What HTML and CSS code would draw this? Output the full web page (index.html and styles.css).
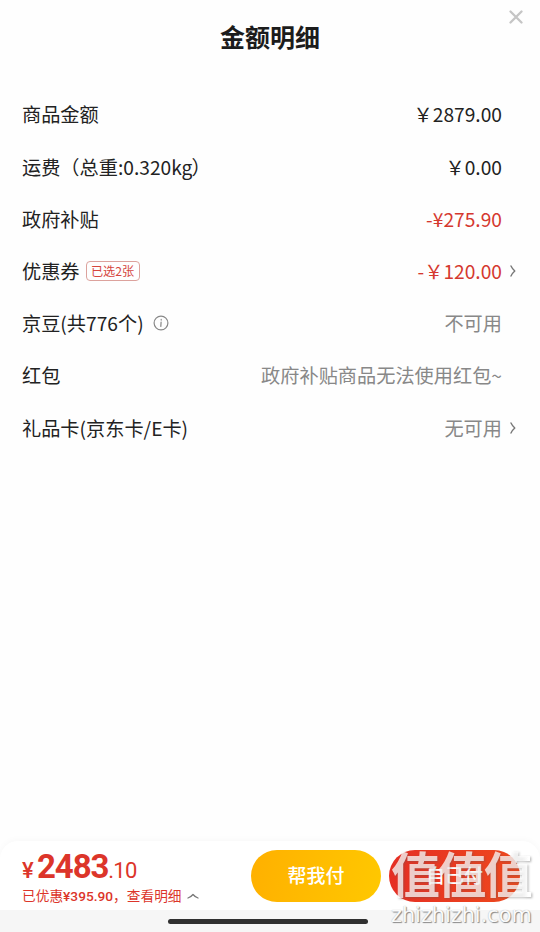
FILE: index.html
```html
<!DOCTYPE html>
<html lang="zh-CN">
<head>
<meta charset="utf-8">
<title>金额明细</title>
<link rel="stylesheet" href="styles.css">
</head>
<body>
<div class="sheet">
  <header class="header">
    <h1>金额明细</h1>
    <svg class="close" viewBox="0 0 14 14"><path d="M1.5 1.5 12.5 12.5M12.5 1.5 1.5 12.5"/></svg>
  </header>
  <main class="list">
    <div class="row"><span>商品金额</span><span class="value">￥2879.00</span></div>
    <div class="row"><span>运费（总重:0.320kg<span class="close-paren">）</span></span><span class="value">￥0.00</span></div>
    <div class="row"><span>政府补贴</span><span class="value red">-¥275.90</span></div>
    <div class="row"><span>优惠券</span><span class="tag">已选2张</span><span class="value red">-￥120.00</span><svg class="arrow" viewBox="0 0 6 12"><path d="M1 1C2.2 3.6 3.4 4.8 4.8 6 3.4 7.2 2.2 8.4 1 11"/></svg></div>
    <div class="row"><span>京豆(共776个)</span><svg class="info" viewBox="0 0 16 16"><circle cx="8" cy="8" r="6.9"/><path d="M8.2 4.4v.7M8.1 7.1 7.8 11.4"/></svg><span class="value gray">不可用</span></div>
    <div class="row"><span>红包</span><span class="value gray">政府补贴商品无法使用红包~</span></div>
    <div class="row"><span>礼品卡(京东卡/E卡)</span><span class="value gray">无可用</span><svg class="arrow" viewBox="0 0 6 12"><path d="M1 1C2.2 3.6 3.4 4.8 4.8 6 3.4 7.2 2.2 8.4 1 11"/></svg></div>
  </main>
  <footer class="bar">
    <div class="total">
      <div class="price"><span class="yen">¥</span><span class="integer">2483</span><span class="decimal">.10</span></div>
      <div class="saved"><span>已优惠<b>¥395.90</b>，查看明细</span><svg class="up" viewBox="0 0 12 6"><path d="M1 5C3.2 4.3 4.7 3 6 1.5 7.3 3 8.8 4.3 11 5"/></svg></div>
    </div>
    <div class="btn yellow">帮我付</div>
    <div class="btn orange">自己付</div>
  </footer>
  <div class="home"><div class="home-line"></div></div>
  <div class="watermark"><div class="mark">值值值</div><div class="site">zhizhizhi.com</div></div>
</div>
</body>
</html>
```
FILE: styles.css
```css
* { box-sizing: border-box; }
body {
  margin: 0;
  background: #fff;
  font-family: "Noto Sans CJK SC", sans-serif;
  color: #222;
}
svg { fill: none; stroke-linecap: round; stroke-linejoin: round; flex: none; }
.sheet {
  position: relative;
  width: 540px;
  height: 932px;
  overflow: hidden;
  display: flex;
  flex-direction: column;
  background: #fefefe;
}
.header { height: 88.4px; padding-top: 18px; text-align: center; }
h1 { margin: 0; font-size: 25px; line-height: 36px; font-weight: 700; color: #1c1c1c; }
.close {
  position: absolute;
  top: 10px;
  right: 17px;
  width: 14px;
  height: 14px;
  stroke: #c5c5c5;
  stroke-width: 2.3;
}
.list { flex: 1; padding: 0 38px 0 22px; }
.row {
  position: relative;
  display: flex;
  align-items: center;
  height: 52.2px;
  font-size: 19.2px;
  line-height: 28px;
  white-space: nowrap;
}
.close-paren { margin-left: -1px; }
.value { margin-left: auto; }
.red { color: #d5382f; }
.gray { color: #888; }
.tag {
  margin-left: 6px;
  width: 54px;
  height: 20px;
  border: 1px solid #dca29d;
  border-radius: 4px;
  font-size: 12.2px;
  line-height: 18px;
  text-align: center;
  color: #d5463e;
}
.arrow {
  width: 6px;
  height: 12px;
  margin: 0 -14px 0 8px;
  stroke: #777;
  stroke-width: 1.4;
}
.info { width: 16px; height: 16px; margin-left: 9px; stroke: #888; stroke-width: 1.2; }
.bar {
  height: 69px;
  display: flex;
  align-items: flex-start;
  padding: 9px 20px 0 22px;
  border-radius: 18px 18px 0 0;
  background: #fff;
  box-shadow: 0 -2px 6px rgba(0, 0, 0, .025);
}
.total { width: 229px; color: #dc352a; white-space: nowrap; }
.price { display: flex; align-items: baseline; height: 35px; line-height: 34px; font-family: Roboto, sans-serif; }
.yen { font-size: 22px; width: 15px; font-weight: 500; }
.integer { font-size: 33px; font-weight: 700; letter-spacing: -1.1px; }
.decimal { font-size: 22px; font-weight: 400; letter-spacing: -.8px; }
.saved { display: flex; align-items: center; font-size: 13.7px; line-height: 20px; }
.saved b { font-family: Roboto, sans-serif; font-weight: 500; }
.up { width: 12px; height: 6px; margin-left: 5px; stroke: #777; stroke-width: 1.3; }
.btn {
  width: 130px;
  height: 52px;
  border-radius: 26px;
  font-size: 19px;
  font-weight: 500;
  line-height: 50px;
  text-align: center;
  color: #fff;
}
.yellow { background: linear-gradient(100deg, #ffb000, #ffc800); }
.orange { width: 131px; margin-left: 8px; background: linear-gradient(100deg, #e52d24, #ef4a1d); }
.home { height: 22px; display: flex; justify-content: center; padding: 9px 4px 0 0; background: #f6f6f6; }
.home-line { width: 200px; height: 5px; border-radius: 3px; background: #303030; }
.watermark { position: absolute; left: 391px; top: 843px; width: 149px; white-space: nowrap; }
.mark {
  height: 60px;
  font-size: 49px;
  line-height: 58px;
  font-weight: 700;
  letter-spacing: -2.6px;
  color: rgba(255, 225, 220, .72);
  background: linear-gradient(90deg, rgba(255, 255, 255, .74) 0 88%, #fff 92%);
  -webkit-background-clip: text;
  background-clip: text;
  color: transparent;
  filter: drop-shadow(1px 1px 1px rgba(90, 90, 90, .5));
}
.site {
  font-family: "DejaVu Sans", sans-serif;
  font-size: 20.8px;
  line-height: 24px;
  color: #fafafa;
  text-shadow: 1px 1px 1px #888, 0 0 1px #aaa;
}
```
